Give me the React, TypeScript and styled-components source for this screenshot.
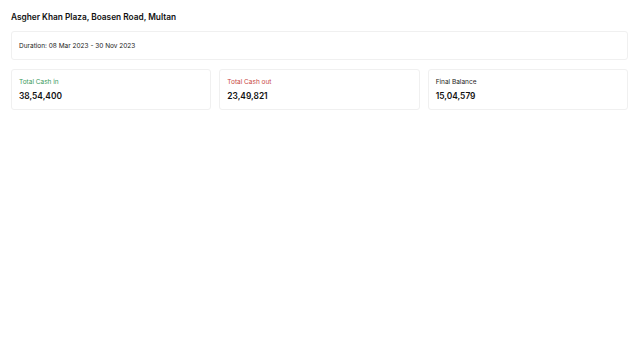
import React from "react";
import styled, { createGlobalStyle } from "styled-components";

const Global = createGlobalStyle`
  html, body { margin: 0; padding: 0; background: #ffffff; }
  body { font-family: Inter, "Noto Sans", sans-serif; color: #111111; }
`;

const Page = styled.div`
  padding: 12px 12px 11px 11px;
  display: flex;
  flex-direction: column;
`;

const Title = styled.h1`
  margin: 0;
  font-size: 8.3px;
  font-weight: 600;
  line-height: 11px;
  color: #111;
`;

const Card = styled.div`
  border: 1px solid #f0f0f0;
  border-radius: 3px;
  background: #fff;
  box-sizing: border-box;
`;

const DurationCard = styled(Card)`
  margin-top: 8px;
  height: 29px;
  display: flex;
  align-items: center;
  padding: 0 7px;
  font-size: 6.5px;
  color: #222;
`;

const Grid = styled.div`
  margin-top: 9px;
  display: grid;
  grid-template-columns: repeat(3, 1fr);
  gap: 8px;
`;

const StatCard = styled(Card)`
  height: 41px;
  padding: 8px 7px 0 7px;
  display: flex;
  flex-direction: column;
  gap: 5px;
`;

const Label = styled.div<{ $tone: "green" | "red" | "plain" }>`
  font-size: 6.5px;
  line-height: 8px;
  color: ${(p) => (p.$tone === "green" ? "#3a9a5a" : p.$tone === "red" ? "#c8473f" : "#222")};
`;

const Value = styled.div`
  font-size: 8.4px;
  line-height: 11px;
  font-weight: 600;
  color: #111;
`;

const stats = [
  { label: "Total Cash in", value: "38,54,400", tone: "green" as const },
  { label: "Total Cash out", value: "23,49,821", tone: "red" as const },
  { label: "Final Balance", value: "15,04,579", tone: "plain" as const },
];

export default function App() {
  return (
    <>
      <Global />
      <Page>
        <Title>Asgher Khan Plaza, Boasen Road, Multan</Title>
        <DurationCard>Duration: 08 Mar 2023 - 30 Nov 2023</DurationCard>
        <Grid>
          {stats.map((s) => (
            <StatCard key={s.label}>
              <Label $tone={s.tone}>{s.label}</Label>
              <Value>{s.value}</Value>
            </StatCard>
          ))}
        </Grid>
      </Page>
    </>
  );
}
